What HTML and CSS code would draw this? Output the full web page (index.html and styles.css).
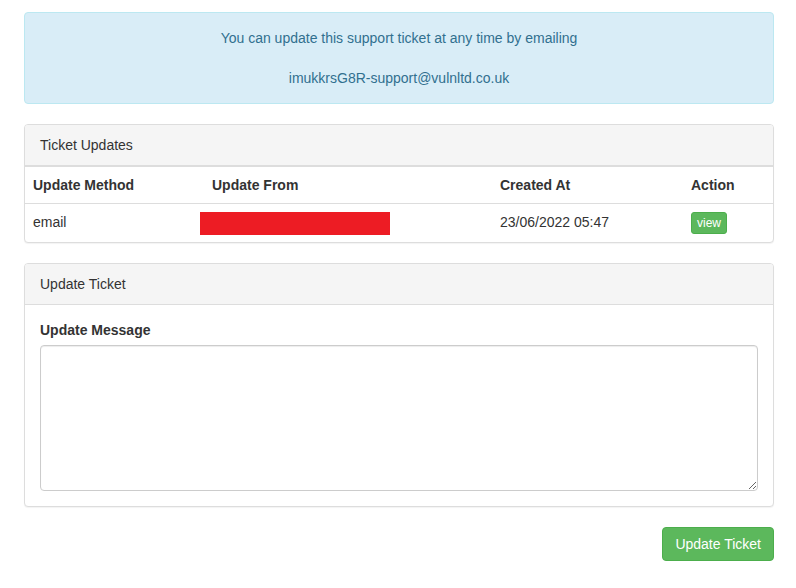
FILE: index.html
```html
<!DOCTYPE html>
<html>
<head>
<meta charset="utf-8">
<link rel="stylesheet" href="styles.css">
</head>
<body>
<div class="container">
  <div class="alert-info">
    You can update this support ticket at any time by emailing<br><br>imukkrsG8R-support@vulnltd.co.uk
  </div>

  <div class="panel">
    <div class="panel-heading">Ticket Updates</div>
    <table class="table">
      <tr>
        <th class="c1">Update Method</th>
        <th class="c2">Update From</th>
        <th class="c3">Created At</th>
        <th class="c4">Action</th>
      </tr>
      <tr>
        <td>email</td>
        <td class="redacted-cell"><span class="redaction"></span></td>
        <td>23/06/2022 05:47</td>
        <td><a class="btn-xs">view</a></td>
      </tr>
    </table>
  </div>

  <div class="panel">
    <div class="panel-heading">Update Ticket</div>
    <div class="panel-body">
      <label class="label">Update Message</label>
      <textarea class="form-control"></textarea>
    </div>
  </div>

  <div class="actions">
    <button class="btn-success">Update Ticket</button>
  </div>
</div>
</body>
</html>
```

FILE: styles.css
```css
* { box-sizing: border-box; }
html, body { margin: 0; padding: 0; }
body {
  font-family: "Liberation Sans", Arial, sans-serif;
  font-size: 14px;
  line-height: 20px;
  color: #333;
  background: #fff;
}
.container {
  width: 750px;
  margin: 12px 0 0 24px;
}
.alert-info {
  background: #d9edf7;
  border: 1px solid #bce8f1;
  color: #31708f;
  border-radius: 4px;
  padding: 15px;
  text-align: center;
  margin-bottom: 20px;
}
.panel {
  border: 1px solid #ddd;
  border-radius: 4px;
  margin-bottom: 20px;
  background: #fff;
  box-shadow: 0 1px 1px rgba(0,0,0,0.05);
}
.panel-heading {
  background: #f5f5f5;
  border-bottom: 1px solid #ddd;
  padding: 10px 15px;
  border-radius: 3px 3px 0 0;
}
.table {
  width: 100%;
  border-collapse: collapse;
  border-spacing: 0;
}
.table th, .table td {
  padding: 8px;
  border-top: 1px solid #ddd;
  text-align: left;
  vertical-align: top;
}
.table th { font-weight: bold; }
.c1 { width: 179px; }
.c2 { width: 288px; }
.c3 { width: 191px; }
.c4 { width: 90px; }
.redacted-cell { position: relative; }
.redaction {
  position: absolute;
  left: -4px;
  top: 8px;
  width: 190px;
  height: 23px;
  background: #ed1c24;
}
.btn-xs {
  display: inline-block;
  padding: 1px 5px;
  font-size: 12px;
  line-height: 18px;
  color: #fff;
  background: #5cb85c;
  border: 1px solid #4cae4c;
  border-radius: 3px;
  margin-top: 0px;
}
.panel-body { padding: 15px; }
.label {
  display: inline-block;
  font-weight: bold;
  margin-bottom: 5px;
}
.form-control {
  display: block;
  width: 100%;
  height: 146px;
  border: 1px solid #ccc;
  border-radius: 4px;
  box-shadow: inset 0 1px 1px rgba(0,0,0,0.075);
  padding: 6px 12px;
  font-family: inherit;
  font-size: 14px;
  margin: 0;
}
.actions {
  display: flex;
  justify-content: flex-end;
}
.btn-success {
  font-family: inherit;
  font-size: 14px;
  line-height: 20px;
  padding: 6px 12px;
  color: #fff;
  background: #5cb85c;
  border: 1px solid #4cae4c;
  border-radius: 4px;
}
```
